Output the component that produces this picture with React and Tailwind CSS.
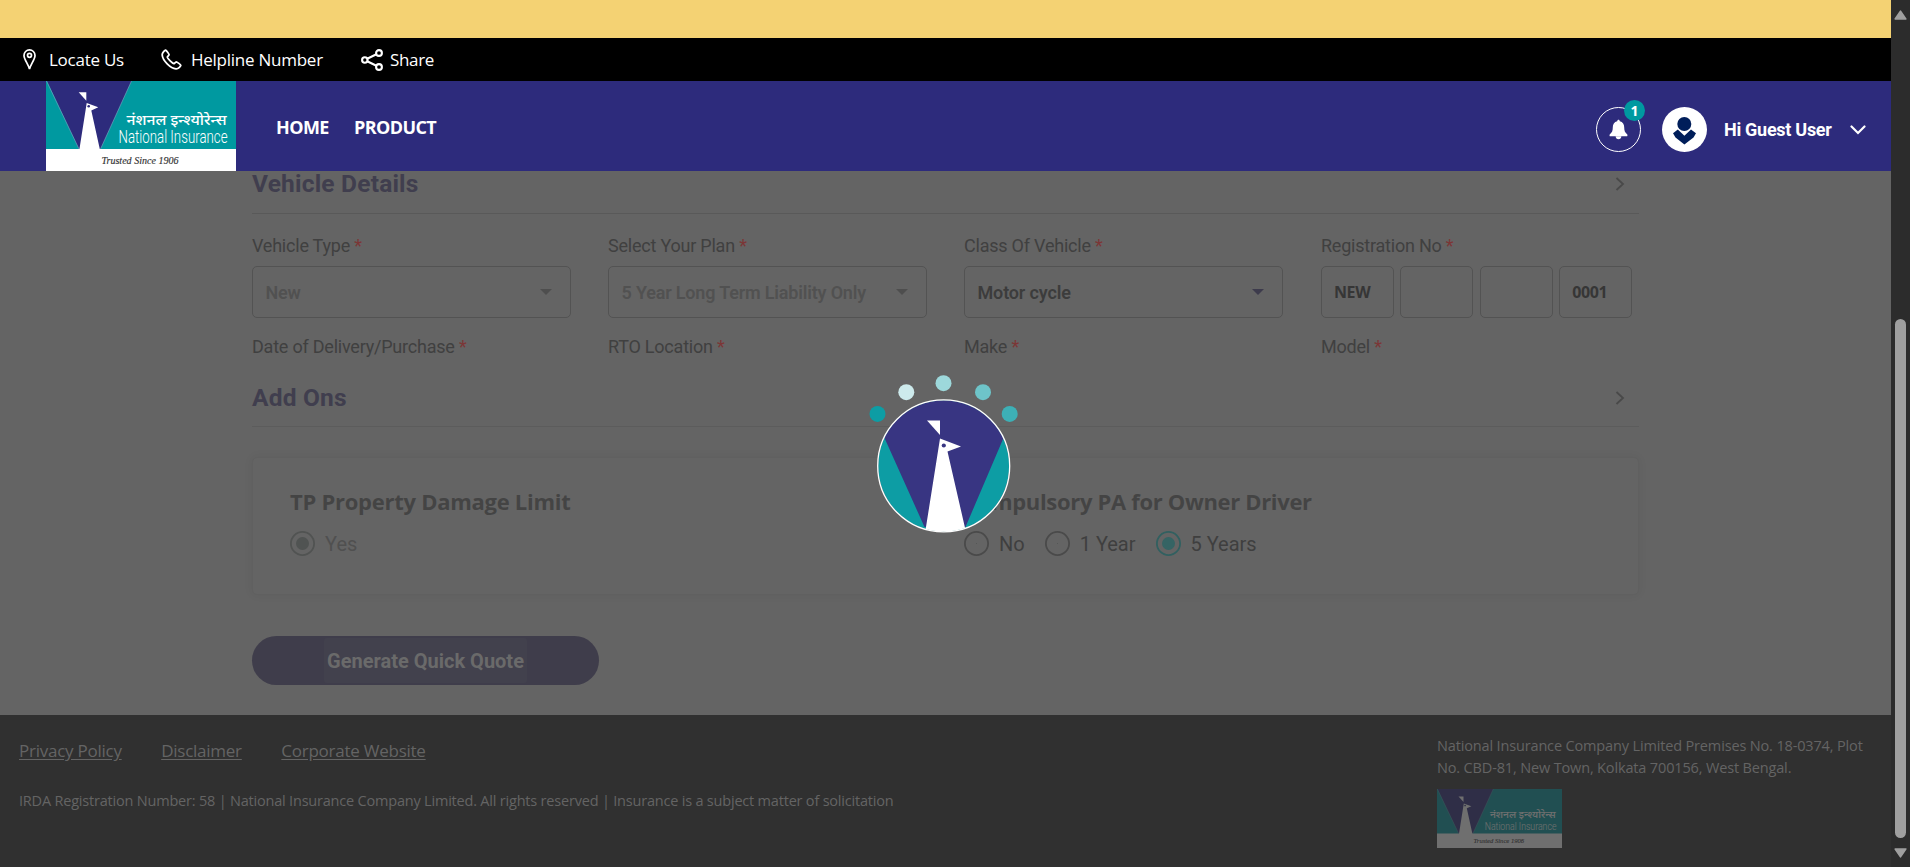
import React from "react";

function Brand({ className }) {
  return (
    <svg className={className} viewBox="0 0 190 90" preserveAspectRatio="none">
      <rect width="190" height="90" fill="#0099a0" />
      <path d="M1 0H85.5L54.5 68H33Z" fill="#2d2b7c" />
      <path d="M0.5 0L33 68M85.5 0L54.5 68" stroke="#7fa9c4" strokeWidth="0.6" />
      <path d="M0 68H190V90H0Z" fill="#fff" />
      <path d="M32.7 11.3H40.3V19.7Z" fill="#fff" />
      <path d="M40.7 22L52.3 26.3L45.3 29.5L54 69H33.3Z" fill="#fff" />
      <circle cx="42.7" cy="25.2" r="1.3" fill="#2d2b7c" />
      <text x="80.5" y="43.5" textLength="100" lengthAdjust="spacingAndGlyphs" fontSize="14.5" fontWeight="500" fill="#fff" fontFamily="'Noto Sans', sans-serif">नंशनल इन्श्योरेन्स</text>
      <text x="72.5" y="61.8" textLength="109" lengthAdjust="spacingAndGlyphs" fontSize="17.5" fill="#fff" fontFamily="Roboto, sans-serif" fontWeight="300">National Insurance</text>
      <text x="55.5" y="83" textLength="77" lengthAdjust="spacingAndGlyphs" fontSize="9.5" fontStyle="italic" fill="#333" stroke="#333" strokeWidth="0.15" fontFamily="'Liberation Serif', serif">Trusted Since 1906</text>
    </svg>
  );
}

function TopBar() {
  return (
    <div className="flex h-[43px] items-center bg-black pl-[23px] font-['Open_Sans',sans-serif] text-[17px] leading-none text-white">
      <div className="flex w-[138px] items-center gap-[13px]">
        <svg className="h-[22px] w-[13px]" viewBox="0 0 13 22" fill="none" stroke="#fff" strokeWidth="1.7">
          <path d="M6.5 20.2C5.6 15.5 1 10.5 1 6.4A5.5 5.5 0 0 1 12 6.4C12 10.5 7.4 15.5 6.5 20.2Z" />
          <circle cx="6.5" cy="6.3" r="2" />
        </svg>
        <span className="w-[76px] whitespace-nowrap tracking-[-0.25px]">Locate Us</span>
      </div>
      <div className="flex w-[200px] items-center gap-[9px]">
        <svg className="h-[21px] w-[21px]" viewBox="0 0 21 21" fill="none" stroke="#fff" strokeWidth="1.8" strokeLinejoin="round">
          <path d="M4.6 1.2C3.6 1.6 1 3.6 1.2 6C1.6 11.5 9.5 19.3 15 19.8C17.4 20 19.4 17.4 19.8 16.4C20 15.8 15.8 12.8 15.2 12.9L12.9 14.7C11.4 14.4 6.6 9.6 6.3 8.1L8.1 5.8C8.2 5.2 5.2 1 4.6 1.2Z" />
        </svg>
        <span className="whitespace-nowrap tracking-[-0.25px]">Helpline Number</span>
      </div>
      <div className="flex items-center gap-[7px]">
        <svg className="h-[22px] w-[22px]" viewBox="0 0 22 22" fill="none" stroke="#fff" strokeWidth="2.1">
          <circle cx="3.8" cy="11" r="2.7" />
          <circle cx="18" cy="4" r="2.9" />
          <circle cx="18" cy="18" r="2.9" />
          <path d="M6.2 9.8L15.4 5.3M6.2 12.2L15.4 16.7" />
        </svg>
        <span className="tracking-[-0.35px]">Share</span>
      </div>
    </div>
  );
}

function Header() {
  return (
    <header className="flex h-[90px] items-center bg-[#2d2b7c] pl-[46px] pr-[25px] text-white">
      <Brand className="h-[90px] w-[190px] shrink-0" />
      <nav className="ml-10 flex gap-[26px] pt-[2px] font-['Open_Sans',sans-serif] text-[18px] font-bold leading-none">
        <span className="w-[52px] tracking-[-0.6px]">HOME</span>
        <span className="tracking-[-0.6px]">PRODUCT</span>
      </nav>
      <div className="ml-auto flex items-center pt-[7px]">
        <div className="relative flex h-[45px] w-[45px] items-center justify-center rounded-full border border-white">
          <svg className="h-[21px] w-[19px]" viewBox="0 0 20 21" fill="#fff">
            <path d="M10 0.3C10.8 0.3 11.3 1 11.4 1.8C14.6 2.5 16 5 16 8.2C16 12 16.8 13.7 19 15.4C19.8 16 19.5 17.7 18.6 17.7H1.4C0.5 17.7 0.2 16 1 15.4C3.2 13.7 4 12 4 8.2C4 5 5.4 2.5 8.6 1.8C8.7 1 9.2 0.3 10 0.3Z" />
            <path d="M7 17.5H13C13 19.3 11.7 20.7 10 20.7S7 19.3 7 17.5Z" />
          </svg>
          <span className="absolute -top-[8px] left-[27px] flex h-[21px] w-[21px] items-center justify-center rounded-full bg-[#0099a0] font-['Open_Sans',sans-serif] text-[14px] font-bold leading-none">1</span>
        </div>
        <svg className="ml-[21px] h-[45px] w-[45px]" viewBox="0 0 45 45">
          <circle cx="22.5" cy="22.5" r="22.5" fill="#fff" />
          <circle cx="22.3" cy="17" r="7" fill="#001e5a" />
          <path d="M15.8 22.5L22.4 28.8L29 22.5L34 26.3L31.5 30.5L22.4 37.5L13.5 30.5L11 26.3Z" fill="#001e5a" />
        </svg>
        <span className="ml-[17px] w-[109px] whitespace-nowrap pt-px font-['Roboto',sans-serif] text-[18px] font-bold leading-none tracking-[-0.28px]">Hi Guest User</span>
        <svg className="ml-[17px] h-[10px] w-[16px]" viewBox="0 0 16 10" fill="none" stroke="#fff" strokeWidth="2.2" strokeLinecap="round">
          <path d="M1.5 1.5L8 8L14.5 1.5" />
        </svg>
      </div>
    </header>
  );
}

function Label({ children }) {
  return (
    <div className="h-[22px] whitespace-nowrap text-[18px] leading-[22px] tracking-[-0.22px] text-[#404040]">
      {children} <span className="text-[#7c3636]">*</span>
    </div>
  );
}

function SelectBox({ value, muted }) {
  return (
    <div className="mt-[9px] flex h-[52px] w-[319px] items-center justify-between rounded-[5px] border border-[#535353] pl-[12.5px] pr-[18px]">
      <span className={muted ? "text-[18px] font-semibold tracking-[-0.18px] text-[#515151]" : "text-[18px] font-semibold tracking-[-0.15px] text-[#3c3c3c]"}>{value}</span>
      <svg className="h-[6px] w-[12px]" viewBox="0 0 12 6">
        <path d="M0 0H12L6 6Z" fill={muted ? "#4e4e4e" : "#3d3b4c"} />
      </svg>
    </div>
  );
}

function Chevron() {
  return (
    <svg className="mr-[14px] h-[14px] w-[10px]" viewBox="0 0 10 14" fill="none" stroke="#494949" strokeWidth="1.8">
      <path d="M1.5 1L8 7L1.5 13" />
    </svg>
  );
}

function Radio({ label, tone }) {
  const ring = tone === "on" ? "#316060" : tone === "muted" ? "#515352" : "#4a4a4a";
  const dot = tone === "on" ? "#356464" : "#505352";
  return (
    <div className="flex items-center gap-[10px]">
      <svg className="h-[25px] w-[25px]" viewBox="0 0 25 25">
        <circle cx="12.5" cy="12.5" r="11.6" fill="none" stroke={ring} strokeWidth="1.8" />
        <circle cx="12.5" cy="12.5" r={tone === "off" ? 0.5 : 6.5} fill={dot} />
      </svg>
      <span className={tone === "muted" ? "text-[20px] leading-none text-[#505050]" : "text-[20px] leading-none text-[#3f3f3f]"}>{label}</span>
    </div>
  );
}

function Form() {
  return (
    <main className="h-[544px] overflow-hidden bg-[#646464] pl-[252px] pr-[252px] font-['Roboto',sans-serif]">
      <div className="flex h-[43px] items-start justify-between border-b border-[#595959]">
        <h2 className="h-[26px] text-[24.5px] font-bold leading-[26px] tracking-[0.2px] text-[#403e4e]">Vehicle Details</h2>
        <div className="flex h-[25px] items-center"><Chevron /></div>
      </div>
      <div className="mt-[21px] grid grid-cols-[356px_356px_357px_317px]">
        <div><Label>Vehicle Type</Label><SelectBox value="New" muted /></div>
        <div><Label>Select Your Plan</Label><SelectBox value="5 Year Long Term Liability Only" muted /></div>
        <div><Label>Class Of Vehicle</Label><SelectBox value="Motor cycle" /></div>
        <div>
          <Label>Registration No</Label>
          <div className="mt-[9px] flex gap-[6.4px]">
            {["NEW", "", "", "0001"].map((part, i) => (
              <div key={i} className="flex h-[52px] w-[73px] shrink-0 items-center rounded-[5px] border border-[#535353] pl-[12px] font-['Open_Sans',sans-serif] text-[16px] font-bold tracking-[-0.4px] text-[#363636]">{part}</div>
            ))}
          </div>
        </div>
      </div>
      <div className="mt-[18px] grid grid-cols-[356px_356px_357px_317px]">
        <Label>Date of Delivery/Purchase</Label>
        <Label>RTO Location</Label>
        <Label>Make</Label>
        <Label>Model</Label>
      </div>
      <div className="mt-[27px] flex h-[42px] items-start justify-between border-b border-[#5c5c5c]">
        <h2 className="h-[26px] text-[24.5px] font-bold leading-[26px] tracking-[0.2px] text-[#403e4e]">Add Ons</h2>
        <div className="flex h-[25px] items-center"><Chevron /></div>
      </div>
      <section className="mt-[30px] grid h-[138px] grid-cols-[674px_1fr] rounded-[5px] border border-[#606060] pl-[37px] pt-[29px] shadow-[0_0_10px_rgba(0,0,0,0.06)]">
        <div>
          <h3 className="h-[28px] whitespace-nowrap font-['Open_Sans',sans-serif] text-[22px] font-bold leading-[28px] tracking-[-0.27px] text-[#444444]">TP Property Damage Limit</h3>
          <div className="mt-[16px]"><Radio label="Yes" tone="muted" /></div>
        </div>
        <div>
          <h3 className="h-[28px] whitespace-nowrap font-['Open_Sans',sans-serif] text-[22px] font-bold leading-[28px] tracking-[-0.33px] text-[#444444]">Compulsory PA for Owner Driver</h3>
          <div className="mt-[16px] flex gap-[20px]">
            <Radio label="No" tone="off" />
            <Radio label="1 Year" tone="off" />
            <Radio label="5 Years" tone="on" />
          </div>
        </div>
      </section>
      <button className="mt-[41px] flex h-[49px] w-[347px] items-center justify-center rounded-full bg-[#3f3d4b]">
        <span className="flex h-[45px] w-[203px] items-center justify-center whitespace-nowrap rounded-[3px] bg-[#42414d] text-[20px] font-bold text-[#6a6a6a]">Generate Quick Quote</span>
      </button>
    </main>
  );
}

function Footer() {
  return (
    <footer className="flex h-[152px] bg-[#303030] pl-[19px] font-['Open_Sans',sans-serif] text-[#646464]">
      <div className="w-[1418px] pt-[23px]">
        <div className="flex h-[25px] gap-[39.5px] text-[17px] leading-[25px] tracking-[-0.25px] underline underline-offset-2">
          <span>Privacy Policy</span>
          <span>Disclaimer</span>
          <span>Corporate Website</span>
        </div>
        <p className="mt-[27px] whitespace-nowrap text-[14.5px] leading-[22px] tracking-[-0.2px]">IRDA Registration Number: 58 | National Insurance Company Limited. All rights reserved | Insurance is a subject matter of solicitation</p>
      </div>
      <div className="pt-[20px]">
        <p className="whitespace-nowrap text-[14.5px] leading-[22px] tracking-[-0.15px]">
          National Insurance Company Limited Premises No. 18-0374, Plot<br />No. CBD-81, New Town, Kolkata 700156, West Bengal.
        </p>
        <Brand className="mt-[10px] h-[59px] w-[125px] opacity-30" />
      </div>
    </footer>
  );
}

function Loader() {
  return (
    <svg className="absolute left-[864px] top-[370px] h-[170px] w-[160px]" viewBox="864 370 160 170">
      <defs>
        <clipPath id="disc"><circle cx="943.7" cy="465.9" r="65.5" /></clipPath>
      </defs>
      <circle cx="877.5" cy="413.9" r="8" fill="#0d9da4" />
      <circle cx="906.3" cy="392.2" r="8" fill="#cdeaec" />
      <circle cx="943.5" cy="383.2" r="8" fill="#9dd8db" />
      <circle cx="983" cy="392.2" r="8" fill="#6ec4c9" />
      <circle cx="1009.7" cy="413.9" r="8" fill="#3db0b6" />
      <g clipPath="url(#disc)">
        <rect x="870" y="395" width="150" height="140" fill="#0d9da4" />
        <path d="M864 395L884.5 438L924.5 527H965.5L1003.5 438L1024 395Z" fill="#383582" />
        <path d="M940 438.5L961 446.5L947.5 451.5L965.5 530L964 535H925L926 527Z" fill="#fff" />
        <path d="M927 420.5H940V435Z" fill="#fff" />
        <circle cx="943.8" cy="445.5" r="2.1" fill="#383582" />
      </g>
      <circle cx="943.7" cy="465.9" r="66" fill="none" stroke="#fff" strokeWidth="1.3" />
    </svg>
  );
}

function ScrollBar() {
  return (
    <div className="flex h-[867px] w-[19px] flex-col items-center bg-[#2c2c2c] pt-[10px]">
      <svg className="h-[10px] w-[13px]" viewBox="0 0 13 10"><path d="M6.5 1.2L11.8 9H1.2Z" fill="#9f9f9f" stroke="#9f9f9f" strokeWidth="1.6" strokeLinejoin="round" /></svg>
      <div className="mt-[299px] h-[519px] w-[11px] rounded-full bg-[#9f9f9f]" />
      <svg className="mt-[10px] h-[10px] w-[13px]" viewBox="0 0 13 10"><path d="M6.5 8.8L11.8 1H1.2Z" fill="#9f9f9f" stroke="#9f9f9f" strokeWidth="1.6" strokeLinejoin="round" /></svg>
    </div>
  );
}

export default function App() {
  return (
    <div className="relative flex h-[867px] w-[1910px] overflow-hidden">
      <div className="w-[1891px]">
        <div className="h-[38px] bg-[#f4d273]" />
        <TopBar />
        <Header />
        <Form />
        <Footer />
      </div>
      <ScrollBar />
      <Loader />
    </div>
  );
}
